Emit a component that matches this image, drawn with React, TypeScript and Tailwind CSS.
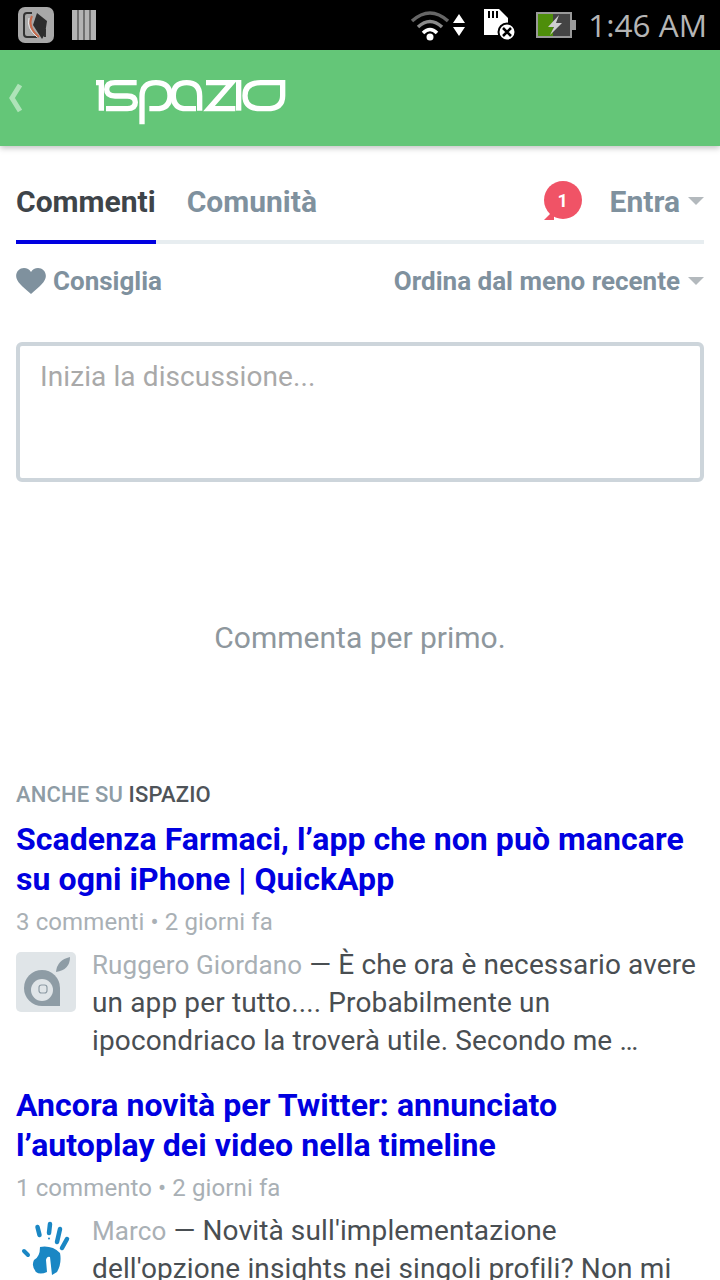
import React from "react";

function Caret() {
  return <span className="ml-2 w-0 h-0 border-x-[8px] border-x-transparent border-t-[8px] border-t-[#b3b9bd]" />;
}

function Article({ title, meta, author, lines, avatar }: { title: string[]; meta: string; author: string; lines: string[]; avatar: React.ReactNode }) {
  return (
    <div>
      <h3 className="text-[32px] leading-[40px] tracking-[0.07px] font-bold text-[#0000e0]">
        {title.map((t) => <div key={t} className="whitespace-nowrap">{t}</div>)}
      </h3>
      <div className="mt-[7px] text-[24px] leading-[32px] tracking-[0.1px] text-[#a9b0b5]">{meta}</div>
      <div className="mt-[8px] flex gap-4">
        <div className="w-[60px] h-[60px] shrink-0 mt-[6px]">{avatar}</div>
        <div className="text-[28px] leading-[38px] tracking-[0.13px] text-[#494e52] whitespace-nowrap">
          <div><span className="text-[26px] tracking-[0.1px] text-[#a9b0b5]">{author}</span> — {lines[0]}</div>
          {lines.slice(1).map((l) => <div key={l}>{l}</div>)}
        </div>
      </div>
    </div>
  );
}

export default function App() {
  return (
    <div className="w-[720px] h-[1280px] overflow-hidden bg-white font-['Roboto',sans-serif]">
      <div className="h-[50px] bg-black flex items-center pl-[18px] pr-[13px]">
        <svg width="36" height="36" viewBox="0 0 36 36">
          <rect width="36" height="36" rx="7" fill="#a8a8a8" />
          <path d="M14 6H9Q6 6 6 9V27Q6 30 9 30H19" fill="none" stroke="#333" strokeWidth="2" />
          <path d="M27 22V30" fill="none" stroke="#333" strokeWidth="2" />
          <path d="M19 6L29 14L27 27L24 32L15 18Z" fill="#2c2c2c" />
          <path d="M14 9Q9 20 21 30" fill="none" stroke="#c8694a" strokeWidth="2" />
          <path d="M11 11Q8 21 19 30" fill="none" stroke="#e9e9e9" strokeWidth="1" />
        </svg>
        <svg width="24" height="30" viewBox="0 0 24 30" className="ml-[18px]">
          <rect x="0" width="24" height="30" fill="#b4b4b4" />
          <path d="M6 0V30M12 0V30M18 0V30" stroke="#5a5a5a" strokeWidth="1.5" />
        </svg>
        <div className="ml-auto flex items-center">
          <svg width="40" height="32" viewBox="0 0 40 32" fill="none">
            <path d="M2 12 Q20 -4 38 12" stroke="#666" strokeWidth="3.5" />
            <path d="M8 18 Q20 7 32 18" stroke="#8a8a8a" strokeWidth="3.5" />
            <path d="M13 24 Q20 17 27 24" stroke="#fff" strokeWidth="3.5" />
            <circle cx="20" cy="28" r="3.5" fill="#fff" />
          </svg>
          <svg width="12" height="24" viewBox="0 0 12 24" className="ml-[3px]">
            <path d="M6 1L12 10H0ZM0 14H12L6 23Z" fill="#fff" />
          </svg>
          <svg width="32" height="32" viewBox="0 0 32 32" className="ml-[19px]">
            <path d="M0 0H15L24 9V26H0Z" fill="#fff" />
            <path d="M5 2V9M9 2V9M13 2V9" stroke="#000" strokeWidth="2" />
            <circle cx="23" cy="23" r="8.5" fill="#fff" stroke="#000" strokeWidth="2" />
            <path d="M19 19L27 27M27 19L19 27" stroke="#000" strokeWidth="2.5" />
          </svg>
          <svg width="40" height="26" viewBox="0 0 40 26" className="ml-[20px]">
            <rect x="1" y="1" width="34" height="24" fill="#444" stroke="#999" strokeWidth="2" />
            <rect x="2" y="2" width="15" height="22" fill="#4e8e0a" />
            <rect x="35" y="8" width="5" height="10" fill="#999" />
            <path d="M23 3L12 15H18L14 23L26 11H20Z" fill="#cfcfcf" />
          </svg>
          <span className="ml-[12px] text-[31.5px] leading-none text-[#b5b5b5] font-['Open_Sans',sans-serif] whitespace-nowrap">1:46 AM</span>
        </div>
      </div>

      <div className="h-[96px] bg-[#64c678] shadow-[0_2px_6px_rgba(0,0,0,0.25)] flex items-center relative">
        <svg width="18" height="30" viewBox="0 0 18 30" className="ml-[7px]" fill="none">
          <path d="M13 2L5 15L13 28" stroke="#aee3b8" strokeWidth="5" />
        </svg>
        <svg width="200" height="60" viewBox="0 0 600 180" className="ml-[65px] mt-[4px]" fill="none" stroke="#fff" strokeWidth="16">
          <path d="M18 38H34V122" />
          <path d="M140 38H75Q50 38 50 58Q50 78 75 78H112Q136 78 136 97Q136 116 112 116H48" />
          <path d="M156 163V80Q156 38 198 38Q240 38 240 77Q240 116 198 116H178" />
          <path d="M329 122V78Q329 38 290 38Q250 38 250 77Q250 116 290 116H318" />
          <path d="M348 38H425L357 116H436" />
          <path d="M446 30V122" />
          <path d="M512 116Q465 116 465 77Q465 38 512 38H578V77Q578 116 530 116Z" />
        </svg>
      </div>

      <div className="px-4">
        <div className="relative h-[98px] flex items-center border-b-4 border-[#e7edf0]">
          <div className="absolute left-0 bottom-[-4px] w-[140px] h-[4px] bg-[#0000e0]" />
          <span className="mt-[16px] text-[30px] font-bold text-[#3e4449]">Commenti</span>
          <span className="mt-[16px] ml-[31px] text-[30px] font-bold text-[#7f919e]">Comunità</span>
          <div className="ml-auto mt-[16px] flex items-center">
            <div className="relative w-[38px] h-[38px] mb-[2px] rounded-full bg-[#f05366] flex items-center justify-center mr-[28px] text-white text-[18px] font-bold">
              1
              <span className="absolute left-0 bottom-[-1px] w-0 h-0 border-l-[10px] border-l-transparent border-b-[10px] border-b-[#f05366]" />
            </div>
            <span className="text-[30px] font-bold text-[#7f919e]">Entra</span>
            <Caret />
          </div>
        </div>

        <div className="mt-[19px] flex items-center h-[36px]">
          <svg width="30" height="26" viewBox="0 0 24 21" className="shrink-0">
            <path d="M12 21C5 15 0 11 0 6.5C0 2.5 3 0 6.3 0C8.7 0 10.8 1.2 12 3.2C13.2 1.2 15.3 0 17.7 0C21 0 24 2.5 24 6.5C24 11 19 15 12 21Z" fill="#7f919e" />
          </svg>
          <span className="ml-[7px] text-[26px] font-bold text-[#7f919e]">Consiglia</span>
          <span className="ml-auto text-[26px] font-bold text-[#7f919e]">Ordina dal meno recente</span>
          <Caret />
        </div>

        <div className="mt-[43px] h-[140px] rounded-[6px] border-4 border-[#cdd5db] px-[20px] pt-[13px] text-[28px] tracking-[0.1px] leading-[36px] text-[#a9a9a9]">
          Inizia la discussione...
        </div>

        <div className="mt-[136px] text-center text-[30px] leading-[40px] text-[#8e979d]">Commenta per primo.</div>

        <div className="mt-[121px] text-[22px] leading-[32px] tracking-[0.15px] font-medium text-[#8e9ca5]">
          ANCHE SU <span className="text-[#4f5459]">ISPAZIO</span>
        </div>

        <div className="mt-[8px] flex flex-col gap-[25px]">
          <Article
            title={["Scadenza Farmaci, l’app che non può mancare", "su ogni iPhone | QuickApp"]}
            meta="3 commenti • 2 giorni fa"
            author="Ruggero Giordano"
            lines={["È che ora è necessario avere", "un app per tutto.... Probabilmente un", "ipocondriaco la troverà utile. Secondo me …"]}
            avatar={
              <svg width="60" height="60" viewBox="0 0 60 60">
                <rect width="60" height="60" rx="5" fill="#e0e5e8" />
                <path d="M44 54H26A18 18 0 1 1 44 36Z" fill="#8e9ca5" />
                <circle cx="26" cy="38" r="11" fill="#e0e5e8" />
                <rect x="23" y="33" width="8" height="8" rx="2.5" fill="none" stroke="#8e9ca5" strokeWidth="1.2" />
                <path d="M40 20Q41 8 54 5Q54 18 40 20Z" fill="#8e9ca5" />
              </svg>
            }
          />
          <Article
            title={["Ancora novità per Twitter: annunciato", "l’autoplay dei video nella timeline"]}
            meta="1 commento • 2 giorni fa"
            author="Marco"
            lines={["Novità sull'implementazione", "dell'opzione insights nei singoli profili? Non mi"]}
            avatar={
              <svg width="60" height="60" viewBox="6 8 60 60" fill="none">
                <g stroke="#1a87c4" strokeLinecap="round">
                  <path d="M27.5 17L29.5 25" strokeWidth="4.5" />
                  <path d="M40 14L39 23" strokeWidth="4.5" />
                  <path d="M50 19L47 32" strokeWidth="4.5" />
                  <path d="M57 29L52 38" strokeWidth="4.5" />
                  <path d="M14 41L18 45" strokeWidth="4" />
                </g>
                <circle cx="39" cy="28.5" r="1" fill="#1a87c4" />
                <path d="M30 37Q42 35 50 43Q52 53 47 62L42 65L40 47Q37 46 36 50L37 62Q30 65 26 62Q21 56 24 50Q30 47 30 37Z" fill="#1a87c4" />
              </svg>
            }
          />
        </div>
      </div>
    </div>
  );
}
